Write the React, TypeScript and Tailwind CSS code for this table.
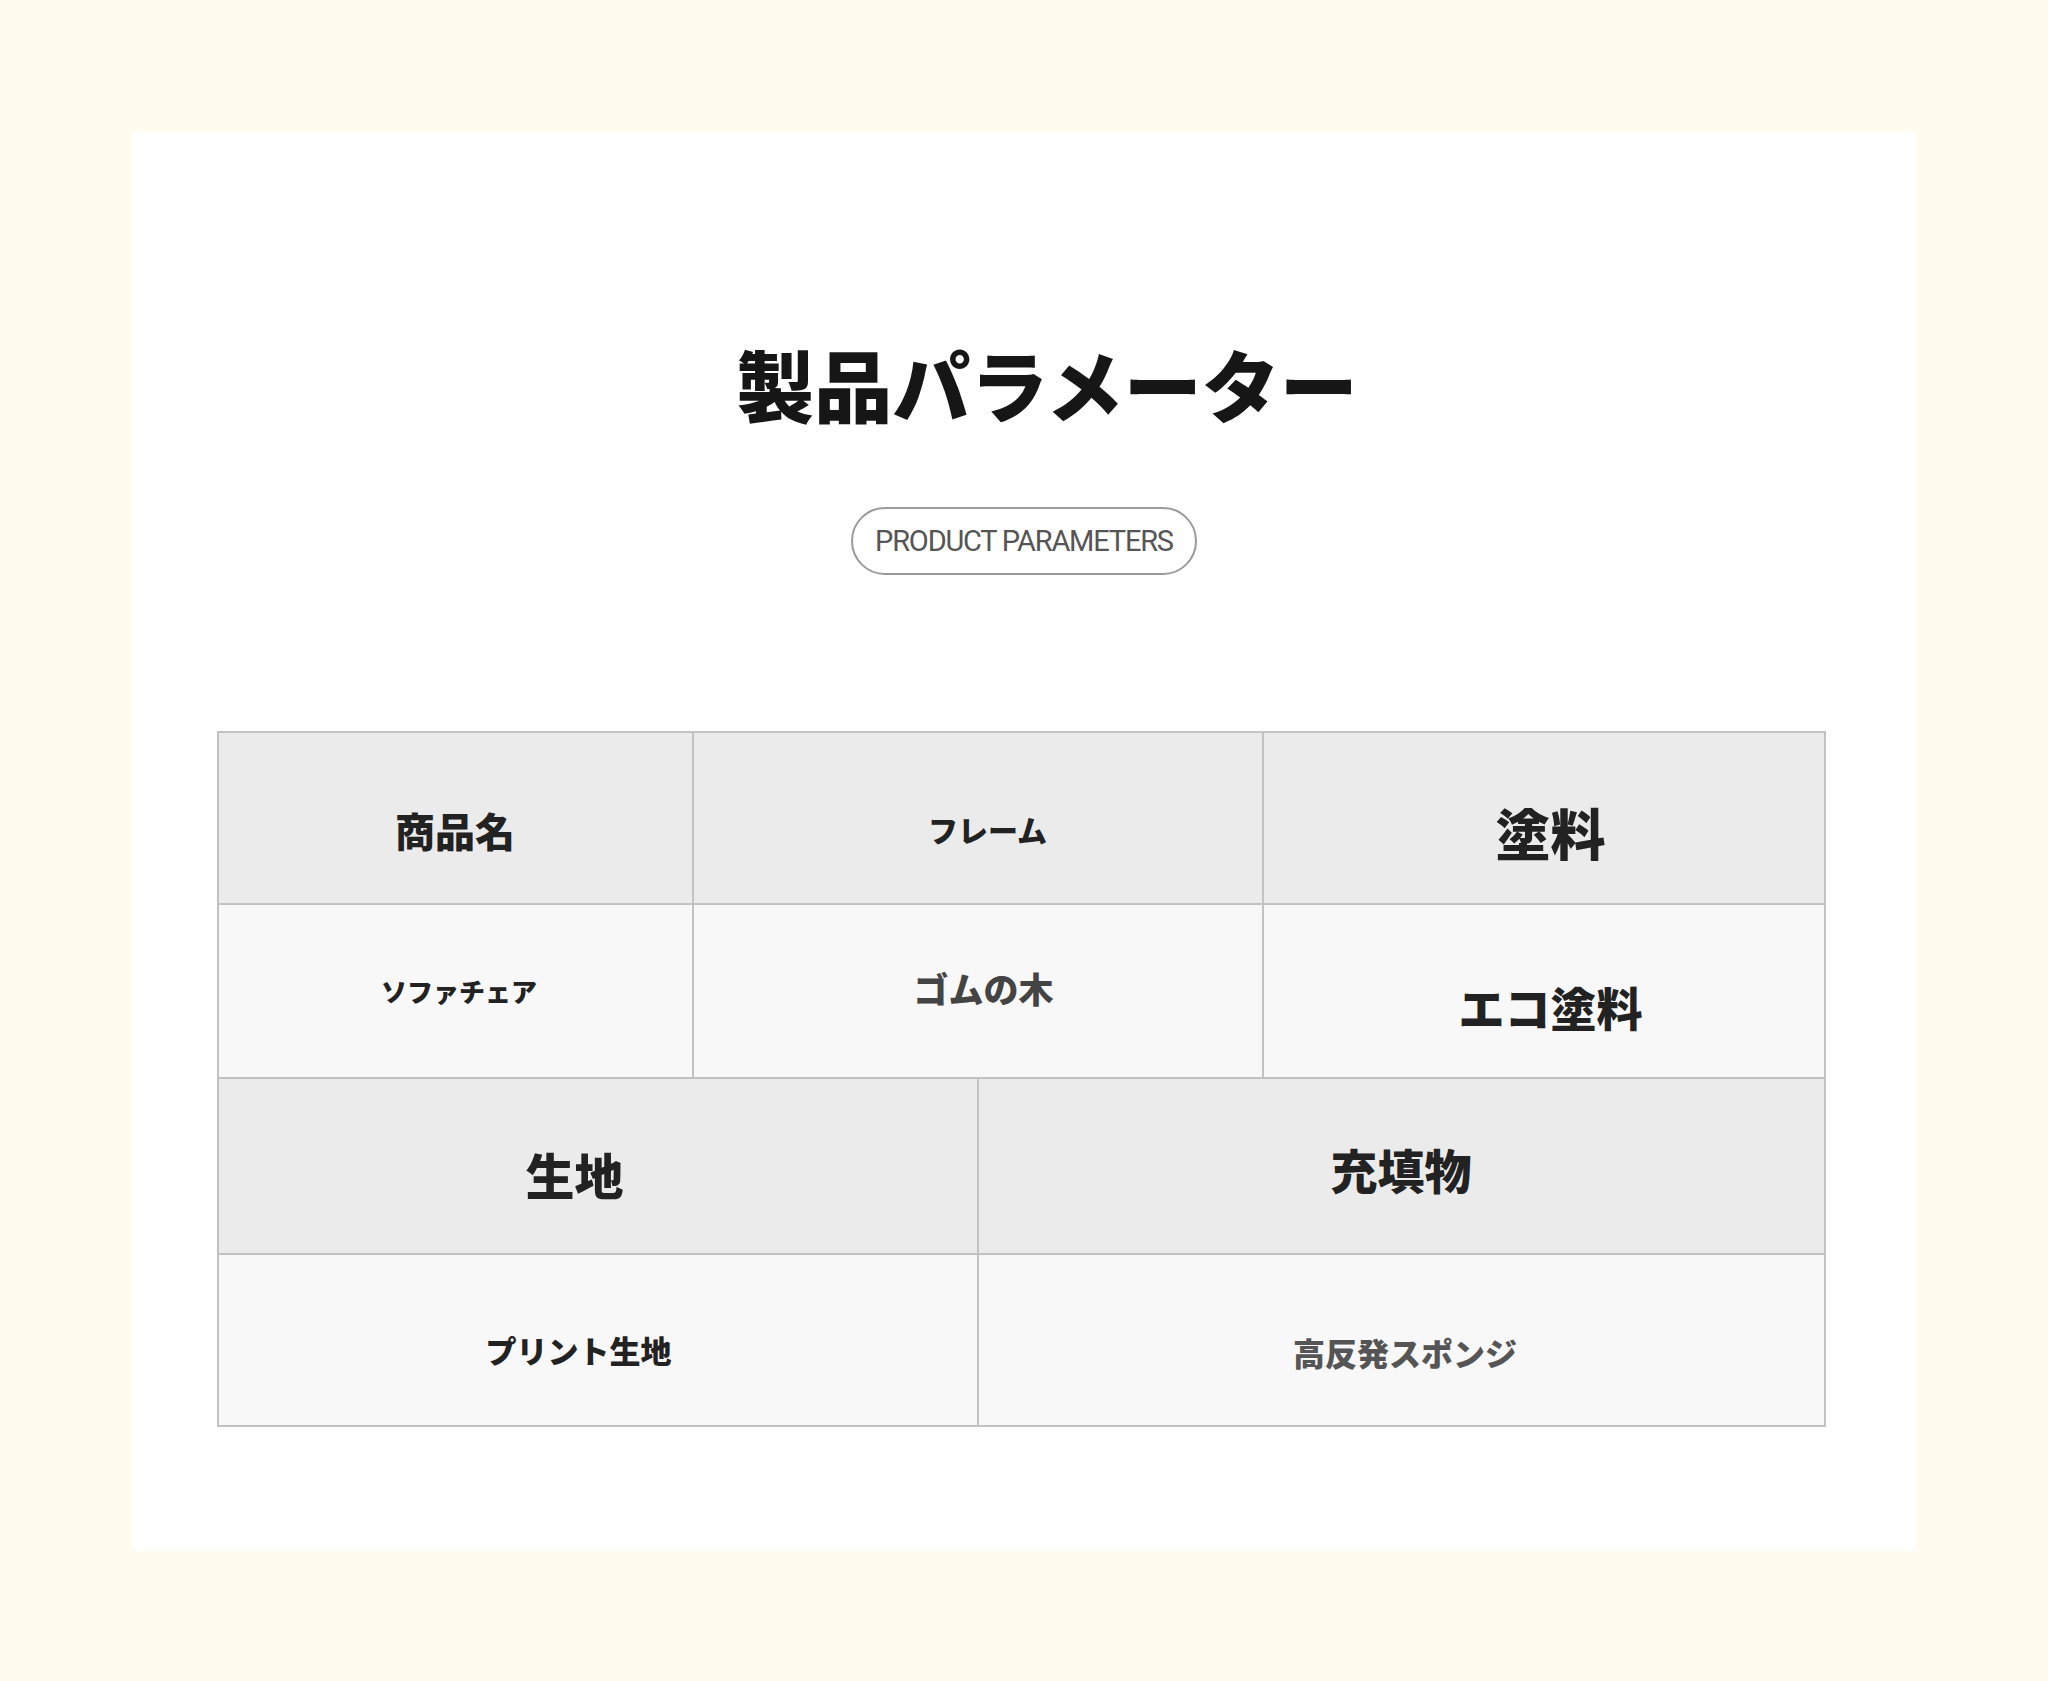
const jp = { fontFamily: '"Noto Sans CJK JP", "Noto Sans", sans-serif' }

type Cell = { text: string; w: string; size: string; color?: string; nudge?: string }

function Row({ cells, bg, h, last }: { cells: Cell[]; bg: string; h: string; last?: boolean }) {
  return (
    <div className={`flex ${h} ${bg} ${last ? '' : 'border-b-2 border-[#c2c2c2]'}`}>
      {cells.map((c, i) => (
        <div
          key={i}
          className={`${c.w} flex items-center justify-center ${i < cells.length - 1 ? 'border-r-2 border-[#c2c2c2]' : ''}`}
        >
          <span className={`${c.size} ${c.color ?? 'text-[#222]'} ${c.nudge ?? ''} font-black leading-none`} style={jp}>
            {c.text}
          </span>
        </div>
      ))}
    </div>
  )
}

export default function App() {
  return (
    <div className="min-h-screen bg-[#fffcef] p-[132px] pb-[130px]">
      <div className="w-[1784px] h-[1419px] bg-white flex flex-col items-center">
        <h1 className="mt-[212px] ml-[46px] text-[78px] font-black leading-none text-[#161616]" style={jp}>
          製品パラメーター
        </h1>
        <div className="mt-[85px] w-[346px] h-[68px] rounded-full border-2 border-[#9a9a9a] flex items-center justify-center">
          <span
            className="text-[29px] tracking-[-1.2px] text-[#555] leading-none"
            style={{ fontFamily: 'Roboto, "Liberation Sans", sans-serif' }}
          >
            PRODUCT PARAMETERS
          </span>
        </div>
        <div className="mt-[156px] -ml-[6px] w-[1609px] border-2 border-[#c2c2c2]">
          <Row
            bg="bg-[#ebebeb]"
            h="h-[172px]"
            cells={[
              { text: '商品名', w: 'w-[475px]', size: 'text-[40px]', nudge: 'mt-[24px]' },
              { text: 'フレーム', w: 'w-[570px]', size: 'text-[30px]', nudge: 'mt-[22px] ml-[20px]' },
              { text: '塗料', w: 'flex-1', size: 'text-[55px]', nudge: 'mt-[26px] ml-[14px]' },
            ]}
          />
          <Row
            bg="bg-[#f8f8f8]"
            h="h-[174px]"
            cells={[
              { text: 'ソファチェア', w: 'w-[475px]', size: 'text-[26px]', nudge: 'ml-[8px]' },
              { text: 'ゴムの木', w: 'w-[570px]', size: 'text-[35px]', color: 'text-[#444]', nudge: '-mt-[8px] ml-[12px]' },
              { text: 'エコ塗料', w: 'flex-1', size: 'text-[46px]', nudge: 'mt-[30px] ml-[14px]' },
            ]}
          />
          <Row
            bg="bg-[#ebebeb]"
            h="h-[176px]"
            cells={[
              { text: '生地', w: 'w-[760px]', size: 'text-[49px]', nudge: 'mt-[14px] -ml-[46px]' },
              { text: '充填物', w: 'flex-1', size: 'text-[47px]', nudge: 'mt-[4px]' },
            ]}
          />
          <Row
            bg="bg-[#f8f8f8]"
            h="h-[170px]"
            last
            cells={[
              { text: 'プリント生地', w: 'w-[760px]', size: 'text-[31px]', nudge: 'mt-[18px] -ml-[38px]' },
              { text: '高反発スポンジ', w: 'flex-1', size: 'text-[32px]', color: 'text-[#555]', nudge: 'mt-[24px] ml-[8px]' },
            ]}
          />
        </div>
      </div>
    </div>
  )
}
